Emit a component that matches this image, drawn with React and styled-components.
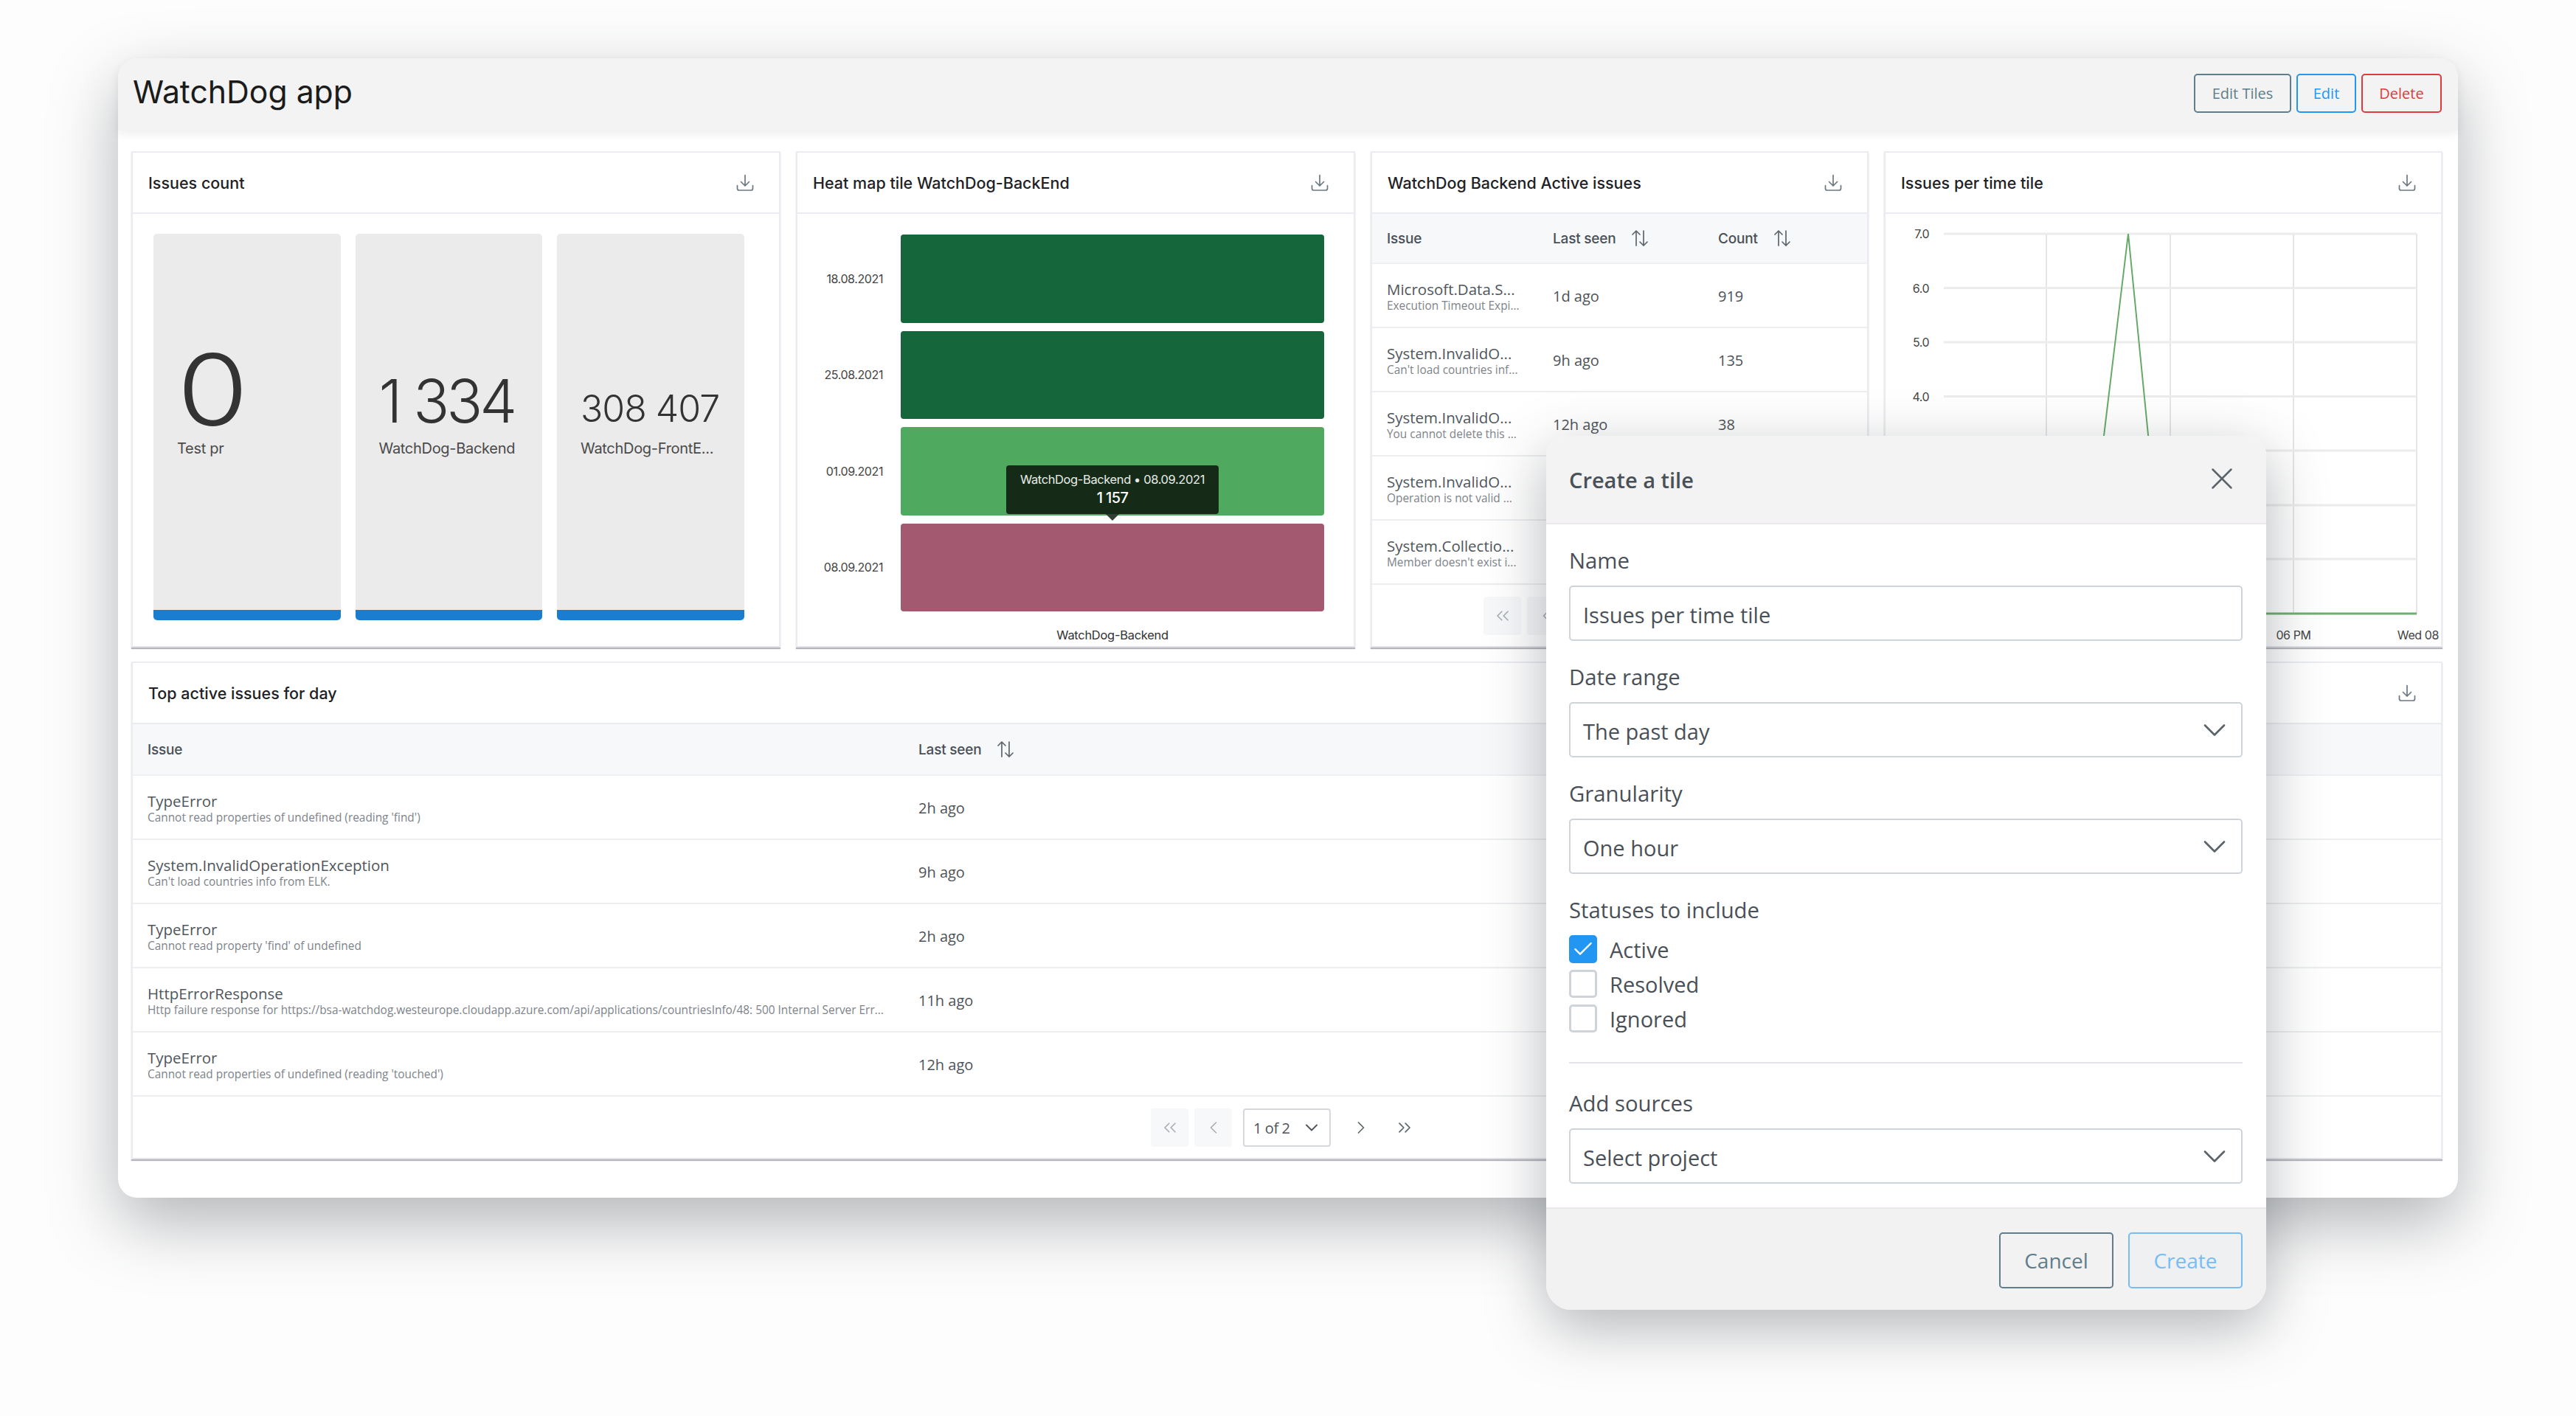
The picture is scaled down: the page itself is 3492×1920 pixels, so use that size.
import React from "react";
import styled, { createGlobalStyle } from "styled-components";
import { ChevronDown, ChevronLeft, ChevronRight, ChevronsLeft, ChevronsRight, X, Check } from "lucide-react";

const GlobalStyle = createGlobalStyle`
  html, body {
    margin: 0;
    background: #fdfdfd;
  }
  * {
    box-sizing: border-box;
  }
`;

const heading = `"Inter", "Liberation Sans", sans-serif`;
const body = `"Open Sans", "Noto Sans", sans-serif`;

const Page = styled.div`
  position: relative;
  width: 3492px;
  height: 1920px;
  padding: 79px 160px;
  overflow: hidden;
`;

const Window = styled.div`
  width: 3172px;
  height: 1545px;
  background: #fff;
  border-radius: 26px;
  box-shadow: 0 34px 90px rgba(50, 55, 65, 0.36);
`;

const Header = styled.header`
  display: flex;
  align-items: center;
  justify-content: space-between;
  height: 98px;
  padding: 0 22px 8px 20px;
  background: #f3f3f3;
  border-radius: 26px 26px 0 0;
  box-shadow: 0 5px 14px rgba(0, 0, 0, 0.07);
`;

const AppTitle = styled.h1`
  margin: 0;
  font: 400 42.7px ${heading};
  color: #1b1b1b;
`;

const Actions = styled.div`
  display: flex;
  gap: 7px;
  margin-top: 4px;
`;

const OutlineButton = styled.button`
  width: ${({ $width }) => $width}px;
  height: ${({ $tall }) => ($tall ? 76 : 53)}px;
  padding: 0;
  background: ${({ $muted }) => ($muted ? "#eef0f2" : "transparent")};
  border: 2px solid ${({ $color }) => $color};
  border-radius: 5px;
  color: ${({ $color }) => $color};
  font: 400 ${({ $tall }) => ($tall ? 28 : 20)}px ${body};
`;

const Content = styled.main`
  display: flex;
  flex-direction: column;
  gap: 19px;
  padding: 28px 21px 0 18px;
`;

const TopRow = styled.div`
  display: grid;
  grid-template-columns: 880px 758px 675px 757px;
  gap: 21px;
  height: 673px;
`;

const Tile = styled.section`
  display: flex;
  flex-direction: column;
  height: ${({ $height }) => ($height ? `${$height}px` : "100%")};
  background: #fff;
  border: 2px solid #ebebf2;
  border-bottom-color: #e3e3ea;
  box-shadow: 0 2px 1px #b4b4ba;
  overflow: hidden;
`;

const TileHead = styled.div`
  display: flex;
  flex: none;
  align-items: center;
  justify-content: space-between;
  height: 83px;
  padding: 0 34px 0 21px;
  border-bottom: 2px solid #ebebf2;
`;

const TileTitle = styled.h2`
  margin: 0;
  font: 500 21.5px ${heading};
  color: #1e2226;
`;

const KpiGrid = styled.div`
  display: grid;
  grid-template-columns: repeat(3, 253.5px);
  gap: 20px;
  flex: 1;
  padding: 27px 0 35px 28px;
`;

const KpiCard = styled.div`
  display: flex;
  flex-direction: column;
  background: #ebebeb;
  border-radius: 5px;
  border-bottom: 14px solid #1b7dd0;
  padding-left: 32px;
`;

const KpiSlot = styled.div`
  display: flex;
  align-items: flex-end;
  height: 276px;
  color: #333;
`;

const KpiNumber = styled.span`
  display: inline-block;
  font: 300 ${({ $size }) => $size}px / 0.74 ${heading};
  letter-spacing: ${({ $track }) => $track}px;
  margin-bottom: ${({ $lift }) => $lift}px;
  transform: scaleX(${({ $stretch }) => $stretch});
  transform-origin: left bottom;
`;

const KpiLabel = styled.span`
  margin-top: 3px;
  font: 400 20px ${heading};
  letter-spacing: -0.3px;
  color: #4a4a4a;
`;

const HeatBody = styled.div`
  display: grid;
  grid-template-columns: 116px 574px;
  grid-auto-rows: 119.5px;
  column-gap: 24px;
  row-gap: 11px;
  padding-top: 28px;
`;

const HeatLabel = styled.span`
  align-self: center;
  text-align: right;
  font: 400 16px ${heading};
  letter-spacing: -0.4px;
  color: #444;
`;

const HeatCell = styled.div`
  position: relative;
  background: ${({ $color }) => $color};
  border-radius: 4px;
`;

const Tooltip = styled.div`
  position: absolute;
  top: 52px;
  left: 50%;
  width: 288px;
  height: 66px;
  padding-top: 8px;
  transform: translateX(-50%);
  background: #152b17;
  border-radius: 4px;
  text-align: center;
  color: #e8ece8;

  &::after {
    content: "";
    position: absolute;
    top: 100%;
    left: 50%;
    margin-left: -9px;
    border: 9px solid transparent;
    border-bottom: 0;
    border-top-color: #2f3f30;
  }
`;

const TooltipTitle = styled.div`
  font: 400 16.5px / 22px ${heading};
  letter-spacing: -0.4px;
`;

const TooltipValue = styled.div`
  font: 500 20px / 28px ${heading};
  letter-spacing: -0.6px;
  color: #fff;
`;

const HeatAxis = styled.div`
  grid-column: 2;
  margin-top: 10px;
  height: 22px;
  text-align: center;
  font: 400 16.5px / 22px ${heading};
  letter-spacing: -0.3px;
  color: #333;
`;

const TableHead = styled.div`
  display: grid;
  flex: none;
  grid-template-columns: ${({ $cols }) => $cols};
  align-items: center;
  height: ${({ $height }) => $height}px;
  padding-left: 20px;
  background: #f7f8fa;
  border-bottom: 2px solid #eef0f3;
  font: 500 19px ${heading};
  letter-spacing: -0.2px;
  color: #495057;
`;

const HeadCell = styled.span`
  display: flex;
  align-items: center;
  gap: 21px;
`;

const Row = styled.div`
  display: grid;
  flex: none;
  grid-template-columns: ${({ $cols }) => $cols};
  align-items: center;
  height: 87px;
  padding: 2px 0 0 20px;
  border-bottom: 2px solid #eceef0;
  font: 400 20px ${body};
  color: #4d5358;
`;

const IssueCell = styled.div`
  display: flex;
  flex-direction: column;
  margin-top: 2px;
`;

const IssueName = styled.span`
  font: 400 20.5px / 24px ${body};
  color: #50565c;
`;

const IssueDetail = styled.span`
  font: 400 15.4px / 22px ${body};
  color: #7d8389;
  white-space: nowrap;
`;

const Pager = styled.nav`
  display: flex;
  justify-content: center;
  gap: 8px;
  padding-top: 16px;
`;

const PagerButton = styled.span`
  display: flex;
  align-items: center;
  justify-content: center;
  width: 51px;
  height: 52px;
  border-radius: 4px;
  background: ${({ $disabled }) => ($disabled ? "#f7f8fa" : "transparent")};
  color: ${({ $disabled }) => ($disabled ? "#a5abb0" : "#5f676e")};
`;

const PagerSelect = styled.span`
  display: flex;
  align-items: center;
  justify-content: space-between;
  width: 119px;
  height: 52px;
  margin: 0 7px;
  padding: 0 10px 0 12px;
  background: #fff;
  border: 2px solid #d5d9de;
  border-radius: 4px;
  font: 400 20px ${body};
  letter-spacing: -0.4px;
  color: #4d5358;
`;

const ChartBody = styled.svg`
  display: block;
  flex: 1;
  width: 100%;
  font-family: ${heading};
`;

const Modal = styled.div`
  position: absolute;
  top: 591px;
  left: 2096px;
  display: flex;
  flex-direction: column;
  width: 976px;
  height: 1185px;
  background: #fff;
  border-radius: 26px 26px 34px 34px;
  box-shadow: 0 24px 80px rgba(50, 55, 65, 0.36);
`;

const ModalHead = styled.div`
  display: flex;
  flex: none;
  align-items: center;
  justify-content: space-between;
  height: 120px;
  padding: 0 35px 0 31px;
  background: #f3f3f3;
  border-bottom: 2px solid #ece8ee;
  border-radius: 26px 26px 0 0;
`;

const ModalTitle = styled.h3`
  margin: 0;
  font: 600 29px ${body};
  color: #495057;
`;

const CloseButton = styled.span`
  display: flex;
  margin-top: -3px;
  color: #5c646b;
`;

const ModalBody = styled.div`
  flex: 1;
  padding: 32px 32px 0 31px;
`;

const Field = styled.div`
  margin-bottom: 32px;
`;

const FieldLabel = styled.div`
  height: 34px;
  margin-bottom: 17px;
  font: 400 29.3px / 34px ${body};
  color: #495057;
`;

const Control = styled.div`
  display: flex;
  align-items: center;
  justify-content: space-between;
  height: 75px;
  padding: 3px 10px 0 17px;
  background: #fff;
  border: 2px solid #ced4da;
  border-radius: 5px;
  font: 400 29px ${body};
  color: #495057;

  svg {
    margin-top: -3px;
  }
`;

const CheckList = styled.div`
  display: flex;
  flex-direction: column;
  gap: 9px;
`;

const CheckRow = styled.label`
  display: flex;
  align-items: center;
  gap: 17px;
  height: 38px;
  font: 400 29px ${body};
  color: #495057;
`;

const CheckBox = styled.span`
  display: flex;
  align-items: center;
  justify-content: center;
  width: 38px;
  height: 38px;
  background: ${({ $on }) => ($on ? "#2196f3" : "#fff")};
  border: 3px solid ${({ $on }) => ($on ? "#2196f3" : "#ced4da")};
  border-radius: 5px;
  color: #fff;
`;

const Divider = styled.hr`
  height: 2px;
  margin: 40px 0 37px;
  border: 0;
  background: #e4e4e8;
`;

const ModalFoot = styled.div`
  display: flex;
  flex: none;
  justify-content: flex-end;
  gap: 20px;
  height: 139px;
  padding: 32px 32px 0 0;
  background: #f2f2f3;
  border-top: 2px solid #ece8ee;
  border-radius: 0 0 34px 34px;
`;

const DownloadIcon = () => (
  <svg width="24" height="24" viewBox="0 0 24 24" fill="none" stroke="#6c7883" strokeWidth="1.7" strokeLinecap="round" strokeLinejoin="round">
    <path d="M1.5 15.5v4a2.5 2.5 0 0 0 2.5 2.5h16a2.5 2.5 0 0 0 2.5-2.5v-4" />
    <path d="M12 1.5v14.5M6.5 10.5l5.5 5.5 5.5-5.5" />
  </svg>
);

const SortIcon = () => (
  <svg width="24" height="24" viewBox="0 0 24 24" fill="none" stroke="#5d656c" strokeWidth="1.7" strokeLinecap="round" strokeLinejoin="round">
    <path d="M7 22V2M2 7l5-5 5 5" />
    <path d="M17 2v20M12 17l5 5 5-5" />
  </svg>
);

const Pagination = () => (
  <Pager>
    <PagerButton $disabled><ChevronsLeft size={28} strokeWidth={1.3} /></PagerButton>
    <PagerButton $disabled><ChevronLeft size={28} strokeWidth={1.3} /></PagerButton>
    <PagerSelect>1 of 2<ChevronDown size={28} strokeWidth={1.6} /></PagerSelect>
    <PagerButton><ChevronRight size={28} strokeWidth={1.5} /></PagerButton>
    <PagerButton><ChevronsRight size={28} strokeWidth={1.5} /></PagerButton>
  </Pager>
);

const SelectArrow = () => <ChevronDown size={52} strokeWidth={1.25} color="#5c646b" />;

const backendCols = "225px 224px 1fr";
const backendIssues = [
  ["Microsoft.Data.S...", "Execution Timeout Expi...", "1d ago", "919"],
  ["System.InvalidO...", "Can't load countries inf...", "9h ago", "135"],
  ["System.InvalidO...", "You cannot delete this ...", "12h ago", "38"],
  ["System.InvalidO...", "Operation is not valid ...", "", ""],
  ["System.Collectio...", "Member doesn't exist i...", "", ""],
];

const topCols = "1045px 1fr";
const topIssues = [
  ["TypeError", "Cannot read properties of undefined (reading 'find')", "2h ago"],
  ["System.InvalidOperationException", "Can't load countries info from ELK.", "9h ago"],
  ["TypeError", "Cannot read property 'find' of undefined", "2h ago"],
  ["HttpErrorResponse", "Http failure response for https://bsa-watchdog.westeurope.cloudapp.azure.com/api/applications/countriesInfo/48: 500 Internal Server Err...", "11h ago"],
  ["TypeError", "Cannot read properties of undefined (reading 'touched')", "12h ago"],
];

const kpis = [
  { value: "0", label: "Test pr", size: 134, track: 0, lift: 15, stretch: 1.17 },
  { value: "1 334", label: "WatchDog-Backend", size: 81, track: -4, lift: 18, stretch: 1 },
  { value: "308 407", label: "WatchDog-FrontE...", size: 50, track: -1, lift: 20, stretch: 1 },
];

const heatRows = [
  ["18.08.2021", "#15663a"],
  ["25.08.2021", "#15663a"],
  ["01.09.2021", "#4fa95f"],
  ["08.09.2021", "#a35a71"],
];

const gridY = [28, 101.5, 175, 248.5, 322, 396, 469];
const gridX = [219, 387, 554, 721];
const yTicks = ["7.0", "6.0", "5.0", "4.0", "3.0", "2.0", "1.0"];

const IssuesChart = () => (
  <ChartBody viewBox="1 1 753 586">
    {gridX.map((x) => (
      <line key={x} x1={x} x2={x} y1={28} y2={543} stroke="#dddddf" strokeWidth="1.5" />
    ))}
    {gridY.map((y) => (
      <line key={y} x1={80} x2={721} y1={y} y2={y} stroke="#ececec" strokeWidth="3" />
    ))}
    {yTicks.map((t, i) => (
      <text key={t} x={60} y={gridY[i] + 6} textAnchor="end" fontSize="16" letterSpacing="-0.5" fill="#444">{t}</text>
    ))}
    <polyline points="80,543 268,543 330,28 381,543 721,543" fill="none" stroke="#66aa68" strokeWidth="2" />
    <line x1={80} x2={721} y1={543} y2={543} stroke="#6fae70" strokeWidth="3" />
    <text x={554} y={578} textAnchor="middle" fontSize="16" letterSpacing="-0.4" fill="#444">06 PM</text>
    <text x={751} y={578} textAnchor="end" fontSize="16" letterSpacing="-0.4" fill="#444">Wed 08</text>
  </ChartBody>
);

const App = () => (
  <Page>
    <GlobalStyle />
    <Window>
      <Header>
        <AppTitle>WatchDog app</AppTitle>
        <Actions>
          <OutlineButton $width={132} $color="#607d8b">Edit Tiles</OutlineButton>
          <OutlineButton $width={81} $color="#2196f3">Edit</OutlineButton>
          <OutlineButton $width={109} $color="#e03a3e">Delete</OutlineButton>
        </Actions>
      </Header>
      <Content>
        <TopRow>
          <Tile>
            <TileHead>
              <TileTitle>Issues count</TileTitle>
              <DownloadIcon />
            </TileHead>
            <KpiGrid>
              {kpis.map((k) => (
                <KpiCard key={k.label}>
                  <KpiSlot>
                    <KpiNumber $size={k.size} $track={k.track} $lift={k.lift} $stretch={k.stretch}>{k.value}</KpiNumber>
                  </KpiSlot>
                  <KpiLabel>{k.label}</KpiLabel>
                </KpiCard>
              ))}
            </KpiGrid>
          </Tile>
          <Tile>
            <TileHead>
              <TileTitle>Heat map tile WatchDog-BackEnd</TileTitle>
              <DownloadIcon />
            </TileHead>
            <HeatBody>
              {heatRows.map(([date, color], i) => (
                <React.Fragment key={date}>
                  <HeatLabel>{date}</HeatLabel>
                  <HeatCell $color={color}>
                    {i === 2 && (
                      <Tooltip>
                        <TooltipTitle>WatchDog-Backend • 08.09.2021</TooltipTitle>
                        <TooltipValue>1 157</TooltipValue>
                      </Tooltip>
                    )}
                  </HeatCell>
                </React.Fragment>
              ))}
              <HeatAxis>WatchDog-Backend</HeatAxis>
            </HeatBody>
          </Tile>
          <Tile>
            <TileHead>
              <TileTitle>WatchDog Backend Active issues</TileTitle>
              <DownloadIcon />
            </TileHead>
            <TableHead $cols={backendCols} $height={68}>
              <span>Issue</span>
              <HeadCell>Last seen <SortIcon /></HeadCell>
              <HeadCell>Count <SortIcon /></HeadCell>
            </TableHead>
            {backendIssues.map(([name, detail, seen, count]) => (
              <Row key={detail} $cols={backendCols}>
                <IssueCell>
                  <IssueName>{name}</IssueName>
                  <IssueDetail>{detail}</IssueDetail>
                </IssueCell>
                <span>{seen}</span>
                <span>{count}</span>
              </Row>
            ))}
            <Pagination />
          </Tile>
          <Tile>
            <TileHead>
              <TileTitle>Issues per time tile</TileTitle>
              <DownloadIcon />
            </TileHead>
            <IssuesChart />
          </Tile>
        </TopRow>
        <Tile $height={675}>
          <TileHead>
            <TileTitle>Top active issues for day</TileTitle>
            <DownloadIcon />
          </TileHead>
          <TableHead $cols={topCols} $height={70}>
            <span>Issue</span>
            <HeadCell>Last seen <SortIcon /></HeadCell>
          </TableHead>
          {topIssues.map(([name, detail, seen]) => (
            <Row key={detail} $cols={topCols}>
              <IssueCell>
                <IssueName>{name}</IssueName>
                <IssueDetail>{detail}</IssueDetail>
              </IssueCell>
              <span>{seen}</span>
            </Row>
          ))}
          <Pagination />
        </Tile>
      </Content>
    </Window>
    <Modal>
      <ModalHead>
        <ModalTitle>Create a tile</ModalTitle>
        <CloseButton><X size={50} strokeWidth={1.2} /></CloseButton>
      </ModalHead>
      <ModalBody>
        <Field>
          <FieldLabel>Name</FieldLabel>
          <Control>Issues per time tile</Control>
        </Field>
        <Field>
          <FieldLabel>Date range</FieldLabel>
          <Control>The past day<SelectArrow /></Control>
        </Field>
        <Field>
          <FieldLabel>Granularity</FieldLabel>
          <Control>One hour<SelectArrow /></Control>
        </Field>
        <FieldLabel>Statuses to include</FieldLabel>
        <CheckList>
          <CheckRow><CheckBox $on><Check size={34} strokeWidth={1.8} /></CheckBox>Active</CheckRow>
          <CheckRow><CheckBox />Resolved</CheckRow>
          <CheckRow><CheckBox />Ignored</CheckRow>
        </CheckList>
        <Divider />
        <FieldLabel>Add sources</FieldLabel>
        <Control>Select project<SelectArrow /></Control>
      </ModalBody>
      <ModalFoot>
        <OutlineButton $tall $width={155} $color="#607d8b">Cancel</OutlineButton>
        <OutlineButton $tall $muted $width={155} $color="#76bdf6">Create</OutlineButton>
      </ModalFoot>
    </Modal>
  </Page>
);

export default App;
